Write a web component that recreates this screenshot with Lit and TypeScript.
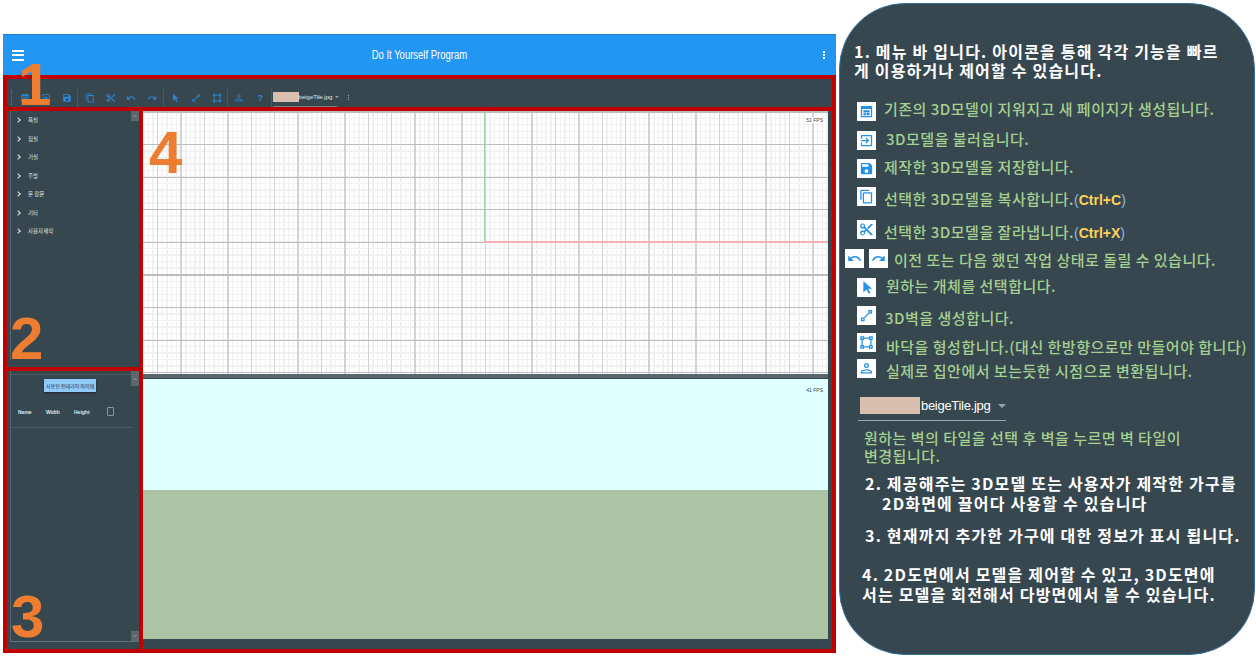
import { css, html, LitElement, svg } from "lit";
import { customElement } from "lit/decorators.js";

const ICONS: Record<string, ReturnType<typeof svg>> = {
  page: svg`<path d="M3 3h18v18H3z M5 8v11h14V8z M7 10h10v3H7z M7 14h4v4H7z M12 14h5v4h-5z" fill-rule="evenodd"/>`,
  load: svg`<path d="M10.1 15.6 11.5 17l5-5-5-5-1.4 1.4 2.6 2.6H3v2h9.7zM19 3H5a2 2 0 0 0-2 2v4h2V5h14v14H5v-4H3v4a2 2 0 0 0 2 2h14a2 2 0 0 0 2-2V5a2 2 0 0 0-2-2z"/>`,
  save: svg`<path d="M17 3H5a2 2 0 0 0-2 2v14a2 2 0 0 0 2 2h14a2 2 0 0 0 2-2V7zm-5 16a3 3 0 1 1 0-6 3 3 0 0 1 0 6zm3-10H5V5h10z"/>`,
  copy: svg`<path d="M16 1H4a2 2 0 0 0-2 2v14h2V3h12zm3 4H8a2 2 0 0 0-2 2v14a2 2 0 0 0 2 2h11a2 2 0 0 0 2-2V7a2 2 0 0 0-2-2zm0 16H8V7h11z"/>`,
  cut: svg`<path d="M9.64 7.64A4 4 0 1 0 8 9.9L10 12l-2 2.1a4 4 0 1 0 1.64 2.26L12 14l7 7h3v-1L9.64 7.64zM6 8a2 2 0 1 1 0-4 2 2 0 0 1 0 4zm0 12a2 2 0 1 1 0-4 2 2 0 0 1 0 4zm6-7.5a.5.5 0 1 1 0-1 .5.5 0 0 1 0 1zM19 3l-6 6 2 2 7-7V3z"/>`,
  undo: svg`<path d="M12.5 8c-2.65 0-5.05 1-6.9 2.6L2 7v9h9l-3.62-3.62A8 8 0 0 1 20.1 16l2.37-.78A10.5 10.5 0 0 0 12.5 8z"/>`,
  redo: svg`<path d="M18.4 10.6A10.5 10.5 0 0 0 1.53 15.22L3.9 16a8 8 0 0 1 12.72-3.62L13 16h9V7z"/>`,
  pointer: svg`<path d="M7 2v18l5-5 3.5 7 2.6-1.3L14.7 14H21z"/>`,
  wall: svg`<path d="M15 3h6v6h-6zM17 5v2h2V5z M3 15h6v6H3zM5 17v2h2v-2z M8 14.6 14.6 8 16 9.4 9.4 16z" fill-rule="evenodd"/>`,
  floor: svg`<path d="M2 2h6v2h8V2h6v6h-2v8h2v6h-6v-2H8v2H2v-6h2V8H2zM8 6v2H6v8h2v2h8v-2h2V8h-2V6zM4 4v2h2V4zM18 4v2h2V4zM4 18v2h2v-2zM18 18v2h2v-2z" fill-rule="evenodd"/>`,
  person: svg`<path d="M12 3a4 4 0 1 1 0 8 4 4 0 0 1 0-8zm0 2a2 2 0 1 0 0 4 2 2 0 0 0 0-4zm0 8c3.3 0 9 1.5 9 4v3H3v-3c0-2.500 5.700-4 9-4zm0 2c-2.700 0-6.500 1.100-7 2v1h14v-1c-.5-.9-4.300-2-7-2z" fill-rule="evenodd"/>`,
};

const icon = (name: string) =>
  html`<svg viewBox="0 0 24 24" aria-hidden="true">${ICONS[name]}</svg>`;

const ROOMS = ["욕실", "침실", "거실", "주방", "문 창문", "기타", "사용자제작"];
const TOOL_GROUPS = [
  ["page", "load", "save"],
  ["copy", "cut", "undo", "redo"],
  ["pointer", "wall", "floor"],
];

// gap/left/textGap/drop are the row offsets read off the reference
const HELP = [
  { icons: ["page"], text: "기존의 3D모델이 지워지고 새 페이지가 생성됩니다.", gap: 0, left: 12, textGap: 8, drop: -3 },
  { icons: ["load"], text: "3D모델을 불러옵니다.", gap: 10, left: 12, textGap: 10, drop: -2 },
  { icons: ["save"], text: "제작한 3D모델을 저장합니다.", gap: 9, left: 12, textGap: 8, drop: -2 },
  { icons: ["copy"], text: "선택한 3D모델을 복사합니다.", key: "Ctrl+C", gap: 9, left: 12, textGap: 8, drop: 2 },
  { icons: ["cut"], text: "선택한 3D모델을 잘라냅니다.", key: "Ctrl+X", gap: 14, left: 12, textGap: 8, drop: 2 },
  { icons: ["undo", "redo"], text: "이전 또는 다음 했던 작업 상태로 돌릴 수 있습니다.", gap: 10, left: 0, textGap: 6, drop: 1 },
  { icons: ["pointer"], text: "원하는 개체를 선택합니다.", gap: 10, left: 12, textGap: 10, drop: -2 },
  { icons: ["wall"], text: "3D벽을 생성합니다.", gap: 9, left: 12, textGap: 9, drop: 2 },
  { icons: ["floor"], text: "바닥을 형성합니다.(대신 한방향으로만 만들어야 합니다)", gap: 8, left: 12, textGap: 10, drop: 4 },
  { icons: ["person"], text: "실제로 집안에서 보는듯한 시점으로 변환됩니다.", gap: 7, left: 12, textGap: 10, drop: 2 },
];

@customElement("app-root")
export class AppRoot extends LitElement {
  static styles = css`
    :host {
      display: flex;
      width: 1256px;
      height: 660px;
      overflow: hidden;
      background: #fff;
      font-family: "Noto Sans CJK KR", "Liberation Sans", sans-serif;
    }

    .app {
      position: relative;
      flex: none;
      width: 833px;
      height: 619px;
      margin: 34px 0 0 3px;
      display: flex;
      flex-direction: column;
    }

    .topbar {
      flex: none;
      height: 41px;
      display: grid;
      grid-template-columns: 1fr auto 1fr;
      align-items: center;
      padding: 0 9px;
      box-sizing: border-box;
      background: #2196f3;
      border-top: 1px solid #1b7fd0;
      color: #fff;
    }

    .menu {
      position: relative;
      width: 12px;
      height: 11px;
      box-sizing: border-box;
      border-top: 2px solid #fff;
      border-bottom: 2px solid #fff;
    }

    .menu::after {
      content: "";
      position: absolute;
      left: 0;
      right: 0;
      top: 2.500px;
      height: 2px;
      background: #fff;
    }

    .title {
      font-family: "Liberation Sans", sans-serif;
      font-size: 12px;
      transform: scaleX(0.79);
    }

    .kebab {
      justify-self: end;
      display: grid;
      gap: 1px;
      margin-right: 2px;
    }

    .kebab i {
      width: 2px;
      height: 2px;
      background: #fff;
    }

    .frame {
      flex: 1;
      min-height: 0;
      display: grid;
      grid-template-columns: 132px 4px 1fr;
      grid-template-rows: 28px 4px 256px 4px 1fr;
      border: 4px solid #c00000;
      background: #c00000;
    }

    .toolbar {
      grid-column: 1 / -1;
      grid-row: 1;
      display: flex;
      align-items: center;
      padding: 9px 0 0 4px;
      box-sizing: border-box;
      background: #37474f;
    }

    .grip {
      width: 1px;
      height: 15px;
      margin-right: 2px;
      border-left: 1px dotted #6a7a82;
    }

    .group {
      display: flex;
      align-items: center;
      height: 18px;
      margin-right: 1px;
      border-right: 1px solid #4a5a62;
    }

    .tool {
      width: 20.800px;
      display: flex;
      justify-content: center;
    }

    .tool svg {
      width: 10px;
      height: 10px;
      fill: #2a86d6;
    }

    .help-mark {
      color: #2a86d6;
      font: bold 9px "Liberation Sans", sans-serif;
    }

    .picker {
      display: flex;
      align-items: center;
      width: 64px;
      height: 18px;
      border-bottom: 1px solid #77848b;
      color: #e3e8ea;
      font: 6px "Liberation Sans", sans-serif;
      white-space: nowrap;
    }

    .swatch {
      flex: none;
      width: 26px;
      height: 10px;
      background: #d9bfae;
    }

    .caret {
      flex: none;
      width: 0;
      height: 0;
      margin-left: 3px;
      border: 2px solid transparent;
      border-top-color: #9aa5aa;
      border-bottom-width: 0;
    }

    .more {
      display: grid;
      gap: 1px;
      margin-left: 11px;
    }

    .more i {
      width: 1px;
      height: 1px;
      background: #a5b0b5;
    }

    .side {
      position: relative;
      grid-column: 1;
      min-height: 0;
      box-sizing: border-box;
      border-left: 4px solid #37474f;
      background: #37474f;
      color: #dfe5e8;
    }

    .side::before {
      content: "";
      position: absolute;
      left: -1px;
      top: 0;
      bottom: 7px;
      width: 1px;
      background: #56656c;
    }

    .rooms-pane {
      grid-row: 3;
    }

    .rooms {
      list-style: none;
      margin: 0;
      padding: 0;
      display: grid;
      grid-auto-rows: 18.500px;
    }

    .rooms li {
      display: flex;
      align-items: center;
      gap: 8px;
      padding-left: 5px;
      font-size: 5.500px;
    }

    .chev {
      width: 3px;
      height: 3px;
      border-top: 1px solid #dfe5e8;
      border-right: 1px solid #dfe5e8;
      transform: rotate(45deg);
    }

    .scroll {
      position: absolute;
      right: 0;
      width: 8px;
      height: 10px;
      display: flex;
      align-items: center;
      justify-content: center;
      background: #5b686f;
    }

    .scroll::after {
      content: "";
      border: 2px solid transparent;
    }

    .scroll.up {
      top: 0;
    }

    .scroll.up::after {
      border-bottom-color: #818d93;
      border-top-width: 0;
    }

    .items .scroll.up {
      height: 15px;
    }

    .scroll.down {
      bottom: 8px;
    }

    .scroll.down::after {
      border-top-color: #818d93;
      border-bottom-width: 0;
    }

    .items {
      grid-row: 5;
      display: flex;
      flex-direction: column;
    }

    .items-inner {
      flex: 1;
      display: flex;
      flex-direction: column;
      margin: 3px 0 7px;
      border-top: 1px solid #4d5c63;
      border-bottom: 1px solid #65747a;
    }

    .chip {
      align-self: flex-start;
      margin: 4px 0 0 33px;
      height: 13px;
      padding: 0 2px;
      line-height: 13px;
      background: #90caf9;
      color: #1f3440;
      font-size: 5px;
      box-shadow: 0 1px 2px rgba(0, 0, 0, 0.5);
    }

    .heads {
      display: flex;
      align-items: center;
      height: 36px;
      box-sizing: border-box;
      margin-right: 7px;
      padding: 4px 0 0 7px;
      border-bottom: 1px solid #4d5c63;
      color: #dfe5e8;
      font: bold 5px "Liberation Sans", sans-serif;
    }

    .heads span {
      width: 28px;
    }

    .heads span:nth-child(3) {
      width: 33px;
    }

    .heads i {
      width: 5px;
      height: 7px;
      border: 1px solid #8b979d;
      border-radius: 1px;
    }

    .views {
      grid-column: 3;
      grid-row: 3 / 6;
      display: flex;
      flex-direction: column;
      min-height: 0;
      padding: 0 4px 10px 0;
      background: #37474f;
    }

    .plan {
      position: relative;
      flex: 1;
      overflow: hidden;
      background-color: #fff;
      background-image:
        repeating-linear-gradient(transparent 0 0.4px, #bcbcbc 0.4px 1.6px, transparent 1.6px 32.6px),
        repeating-linear-gradient(90deg, transparent 0 14px, #d2d2d2 14px 15.4px, transparent 15.4px 23.4px),
        repeating-linear-gradient(#f1f1f1 0 1.4px, transparent 1.4px 6.52px),
        repeating-linear-gradient(90deg, #f1f1f1 0 1.4px, transparent 1.4px 4.68px);
    }

    .axis-y {
      position: absolute;
      left: 341px;
      top: 0;
      width: 1px;
      height: 131px;
      background: #9ad6a0;
    }

    .axis-x {
      position: absolute;
      left: 341px;
      right: 0;
      top: 130px;
      height: 2px;
      background: #f7b0b0;
    }

    .fps {
      position: absolute;
      right: 4px;
      top: 6px;
      padding: 0 1px;
      font: 5px "Liberation Sans", sans-serif;
      color: #444;
      background: #fff;
    }

    .divider {
      flex: none;
      height: 5px;
      background: #5a666c;
      border-bottom: 1px solid #37474f;
      box-sizing: border-box;
    }

    .scene {
      position: relative;
      flex: none;
      height: 260px;
      display: flex;
      flex-direction: column;
    }

    .scene .fps {
      top: 8px;
      background: #e0ffff;
    }

    .sky {
      height: 111px;
      background: #e0ffff;
    }

    .ground {
      flex: 1;
      background: #acc4a4;
    }

    .badge {
      position: absolute;
      font: bold 60px "Liberation Sans", sans-serif;
      line-height: 1;
      color: #ed7d31;
      pointer-events: none;
    }

    .b1 {
      left: 15px;
      top: 21px;
    }

    .b2 {
      left: 7px;
      top: 275px;
    }

    .b3 {
      left: 8px;
      top: 553px;
    }

    .b4 {
      left: 146px;
      top: 89px;
    }

    .notes {
      flex: none;
      width: 416px;
      height: 652px;
      margin: 3px 0 0 3px;
      box-sizing: border-box;
      border: 1px solid #2f6f9f;
      border-radius: 66px;
      background: #37474f;
      padding: 38px 0 0 5px;
      color: #fff;
      font-weight: 700;
    }

    .lead {
      margin: 0 0 22px 9px;
      font-size: 16px;
      line-height: 19px;
      letter-spacing: 1.200px;
      white-space: nowrap;
    }

    .row {
      display: flex;
      align-items: flex-start;
      height: 19px;
      color: #a5d08f;
      font-size: 15px;
      line-height: 20px;
      letter-spacing: 0.500px;
      font-weight: 500;
      white-space: nowrap;
    }

    .ics {
      flex: none;
      display: flex;
      gap: 5px;
    }

    .ic {
      width: 19px;
      height: 19px;
      background: #fff;
      display: flex;
      align-items: center;
      justify-content: center;
    }

    .ic svg {
      width: 15px;
      height: 15px;
      fill: #2490e8;
    }

    .key {
      color: #8fb8e0;
      font-family: "Liberation Sans", sans-serif;
      font-size: 14px;
      letter-spacing: 0;
    }

    .key b {
      color: #ffd257;
    }

    .sample {
      display: flex;
      align-items: flex-start;
      width: 148px;
      height: 24px;
      margin: 19px 0 0 13px;
      padding-left: 2px;
      box-sizing: border-box;
      border-bottom: 1px solid #9aa5aa;
      color: #fff;
      font: 13px/17px "Liberation Sans", sans-serif;
      letter-spacing: -0.300px;
    }

    .sample .swatch {
      width: 60px;
      height: 17px;
      margin-right: 1px;
    }

    .sample .caret {
      margin: 7px 0 0 8px;
      border-width: 4px;
      border-bottom-width: 0;
    }

    .hint {
      margin: 8px 0 0 19px;
      color: #a5d08f;
      font-size: 15px;
      line-height: 18px;
      letter-spacing: 0.500px;
      font-weight: 500;
      white-space: nowrap;
    }

    .step {
      margin: 0;
      font-size: 16px;
      line-height: 20px;
      letter-spacing: 1.200px;
      white-space: nowrap;
    }

    .step span {
      display: block;
    }

    .s2 {
      margin: 8px 0 0 20px;
    }

    .s2 span + span {
      margin-left: 17px;
    }

    .s3 {
      margin: 12px 0 0 20px;
    }

    .s4 {
      margin: 19px 0 0 17px;
    }
  `;

  render() {
    return html`
      <section class="app">
        <header class="topbar">
          <span class="menu"></span>
          <span class="title">Do It Yourself Program</span>
          <span class="kebab"><i></i><i></i><i></i></span>
        </header>
        <div class="frame">
          <div class="toolbar">
            <span class="grip"></span>
            ${TOOL_GROUPS.map(
              (group) => html`<div class="group">
                ${group.map((name) => html`<span class="tool">${icon(name)}</span>`)}
              </div>`,
            )}
            <div class="group">
              <span class="tool">${icon("person")}</span>
              <span class="tool help-mark">?</span>
            </div>
            <div class="picker">
              <span class="swatch"></span>beigeTile.jpg<span class="caret"></span>
            </div>
            <span class="more"><i></i><i></i><i></i></span>
          </div>

          <aside class="side rooms-pane">
            <ul class="rooms">
              ${ROOMS.map((room) => html`<li><span class="chev"></span>${room}</li>`)}
            </ul>
            <span class="scroll up"></span>
          </aside>

          <aside class="side items">
            <div class="items-inner">
              <span class="chip">사용된 인테리어 아이템</span>
              <div class="heads">
                <span>Name</span><span>Width</span><span>Height</span><i></i>
              </div>
            </div>
            <span class="scroll up"></span>
            <span class="scroll down"></span>
          </aside>

          <main class="views">
            <div class="plan">
              <span class="axis-y"></span>
              <span class="axis-x"></span>
              <span class="fps">51 FPS</span>
            </div>
            <div class="divider"></div>
            <div class="scene">
              <div class="sky"></div>
              <div class="ground"></div>
              <span class="fps">41 FPS</span>
            </div>
          </main>
        </div>
        <span class="badge b1">1</span>
        <span class="badge b2">2</span>
        <span class="badge b3">3</span>
        <span class="badge b4">4</span>
      </section>

      <section class="notes">
        <p class="lead">
          1. 메뉴 바 입니다. 아이콘을 통해 각각 기능을 빠르<br />게 이용하거나 제어할 수 있습니다.
        </p>
        ${HELP.map(
          (row) => html`<div
            class="row"
            style="margin-top:${row.gap}px;padding-left:${row.left}px"
          >
            <div class="ics">
              ${row.icons.map((name) => html`<span class="ic">${icon(name)}</span>`)}
            </div>
            <span style="margin:${row.drop}px 0 0 ${row.textGap}px">
              ${row.text}${row.key
                ? html`<span class="key">(<b>${row.key}</b>)</span>`
                : ""}
            </span>
          </div>`,
        )}
        <div class="sample">
          <span class="swatch"></span>beigeTile.jpg<span class="caret"></span>
        </div>
        <p class="hint">원하는 벽의 타일을 선택 후 벽을 누르면 벽 타일이<br />변경됩니다.</p>
        <p class="step s2">
          <span>2. 제공해주는 3D모델 또는 사용자가 제작한 가구를</span>
          <span>2D화면에 끌어다 사용할 수 있습니다</span>
        </p>
        <p class="step s3">3. 현재까지 추가한 가구에 대한 정보가 표시 됩니다.</p>
        <p class="step s4">
          <span>4. 2D도면에서 모델을 제어할 수 있고, 3D도면에</span>
          <span>서는 모델을 회전해서 다방면에서 볼 수 있습니다.</span>
        </p>
      </section>
    `;
  }
}
